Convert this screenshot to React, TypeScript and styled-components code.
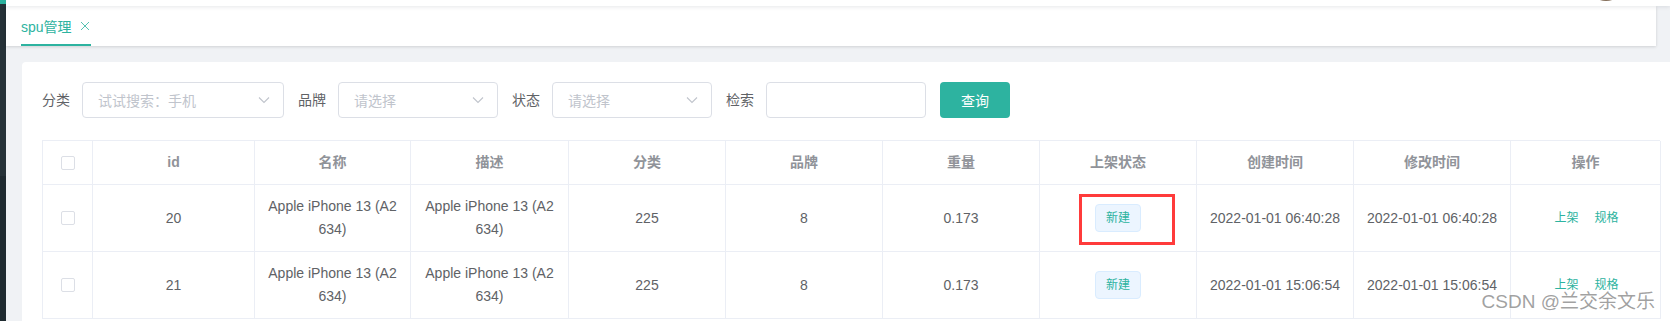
import React from 'react';
import styled, { createGlobalStyle } from 'styled-components';

const GlobalStyle = createGlobalStyle`
  html, body {
    margin: 0;
    padding: 0;
    background: #f0f2f5;
  }
  body {
    font-family: 'Liberation Sans', 'Noto Sans CJK SC', sans-serif;
    font-size: 14px;
    color: #606266;
  }
  * {
    box-sizing: border-box;
  }
`;

const THEME = '#2db3a0';

const Page = styled.div`
  position: relative;
  display: flex;
  width: 1670px;
  height: 321px;
  overflow: hidden;
`;

const Sidebar = styled.div`
  width: 6px;
  flex-shrink: 0;
  background: linear-gradient(to bottom, ${THEME} 0px, ${THEME} 4px, #263238 4px, #263238 176px, #1f2a30 176px);
`;

const Main = styled.div`
  flex: 1;
  display: flex;
  flex-direction: column;
  min-width: 0;
  background: #f0f2f5;
`;

const Navbar = styled.div`
  position: relative;
  z-index: 2;
  height: 6px;
  display: flex;
  justify-content: flex-end;
  padding-right: 44px;
  background: #fff;
  box-shadow: 0 1px 4px rgba(0, 21, 41, 0.1);
`;

const Avatar = styled.div`
  width: 40px;
  height: 40px;
  margin-top: -39px;
  border-radius: 50%;
  background: radial-gradient(circle at 50% 80%, #7a6450, #a89078);
`;

const TagsBar = styled.div`
  position: relative;
  z-index: 1;
  height: 40px;
  margin-right: 14px;
  display: flex;
  align-items: stretch;
  padding-left: 15px;
  background: #fff;
  box-shadow: 0 1px 3px rgba(0, 0, 0, 0.12), 0 0 3px rgba(0, 0, 0, 0.04);
`;

const Tag = styled.div`
  display: flex;
  align-items: center;
  gap: 8px;
  width: 70px;
  padding-top: 1px;
  white-space: nowrap;
  color: ${THEME};
  font-size: 14px;
  border-bottom: 2px solid ${THEME};
`;

const Content = styled.div`
  flex: 1;
  padding: 16px 0 0 16px;
  overflow: hidden;
`;

const Card = styled.div`
  width: 1658px;
  height: 300px;
  padding: 20px;
  background: #fff;
  border-radius: 4px;
`;

const Form = styled.div`
  display: flex;
  align-items: center;
  margin-bottom: 22px;
`;

const FormItem = styled.div`
  display: flex;
  align-items: center;
  margin-right: 14px;
`;

const Label = styled.span`
  padding-right: 12px;
  font-size: 14px;
  color: #606266;
  line-height: 36px;
`;

const Select = styled.div<{ $width: number }>`
  display: flex;
  align-items: center;
  justify-content: space-between;
  width: ${p => p.$width}px;
  height: 36px;
  padding: 0 13px 0 15px;
  border: 1px solid #dcdfe6;
  border-radius: 4px;
  background: #fff;
  color: #c0c4cc;
  font-size: 14px;
`;

const Button = styled.div`
  width: 70px;
  height: 36px;
  display: flex;
  align-items: center;
  justify-content: center;
  border-radius: 4px;
  background: ${THEME};
  color: #fff;
  font-size: 14px;
`;

const Grid = styled.div`
  display: grid;
  grid-template-columns: 50px 162px 156px 158px 157px 157px 157px 157px 157px 157px 150px;
  border-top: 1px solid #ebeef5;
  border-left: 1px solid #ebeef5;
  width: 1618px;
`;

const Cell = styled.div<{ $head?: boolean }>`
  position: relative;
  display: flex;
  align-items: center;
  justify-content: center;
  height: ${p => (p.$head ? 44 : 67)}px;
  padding: 10px 10px;
  border-right: 1px solid #ebeef5;
  border-bottom: 1px solid #ebeef5;
  line-height: 23px;
  font-size: 14px;
  text-align: center;
  word-break: break-all;
  color: ${p => (p.$head ? '#909399' : '#606266')};
  font-weight: ${p => (p.$head ? 'bold' : 'normal')};
`;

const Wrap = styled.span`
  display: block;
  max-width: 132px;
`;

const Checkbox = styled.span`
  display: inline-block;
  width: 14px;
  height: 14px;
  border: 1px solid #dcdfe6;
  border-radius: 2px;
  background: #fff;
`;

const StatusTag = styled.span`
  display: inline-flex;
  align-items: center;
  justify-content: center;
  width: 46px;
  height: 28px;
  border: 1px solid #d9ecff;
  border-radius: 4px;
  background: #ecf5ff;
  color: ${THEME};
  font-size: 12px;
`;

const Highlight = styled.div`
  position: absolute;
  left: 39px;
  top: 9px;
  width: 96px;
  height: 51px;
  border: 3px solid #ff3b3b;
`;

const Actions = styled.div`
  display: flex;
  gap: 16px;
  font-size: 12px;
  color: ${THEME};
  padding-left: 2px;
`;

const Watermark = styled.div`
  position: absolute;
  right: 15px;
  top: 290px;
  font-size: 19px;
  line-height: 24px;
  color: rgba(130, 130, 130, 0.75);
  text-shadow: 0 0 1px #fff, 1px 1px 0 rgba(255, 255, 255, 0.8);
  white-space: nowrap;
`;

const Chevron = () => (
  <svg width="12" height="8" viewBox="0 0 12 8" fill="none">
    <polyline points="1,1.5 6,6.5 11,1.5" stroke="#c0c4cc" strokeWidth="1.1" />
  </svg>
);

const CloseIcon = () => (
  <svg width="10" height="10" viewBox="0 0 10 10">
    <path d="M1 1 L9 9 M9 1 L1 9" stroke={THEME} strokeWidth="1" opacity="0.8" />
  </svg>
);

const headers = ['id', '名称', '描述', '分类', '品牌', '重量', '上架状态', '创建时间', '修改时间', '操作'];

const rows = [
  { id: 20, name: 'Apple iPhone 13 (A2634)', cat: 225, brand: 8, weight: '0.173', time: '2022-01-01 06:40:28' },
  { id: 21, name: 'Apple iPhone 13 (A2634)', cat: 225, brand: 8, weight: '0.173', time: '2022-01-01 15:06:54' },
];

const App = () => {
  return (
    <Page>
      <GlobalStyle />
      <Sidebar />
      <Main>
        <Navbar>
          <Avatar />
        </Navbar>
        <TagsBar>
          <Tag>
            spu管理
            <CloseIcon />
          </Tag>
        </TagsBar>
        <Content>
          <Card>
            <Form>
              <FormItem>
                <Label>分类</Label>
                <Select $width={202}>
                  试试搜索：手机
                  <Chevron />
                </Select>
              </FormItem>
              <FormItem>
                <Label>品牌</Label>
                <Select $width={160}>
                  请选择
                  <Chevron />
                </Select>
              </FormItem>
              <FormItem>
                <Label>状态</Label>
                <Select $width={160}>
                  请选择
                  <Chevron />
                </Select>
              </FormItem>
              <FormItem>
                <Label>检索</Label>
                <Select $width={160} />
              </FormItem>
              <Button>查询</Button>
            </Form>
            <Grid>
              <Cell $head>
                <Checkbox />
              </Cell>
              {headers.map(h => (
                <Cell $head key={h}>
                  {h}
                </Cell>
              ))}
              {rows.map((row, index) => (
                <React.Fragment key={row.id}>
                  <Cell>
                    <Checkbox />
                  </Cell>
                  <Cell>{row.id}</Cell>
                  <Cell>
                    <Wrap>{row.name}</Wrap>
                  </Cell>
                  <Cell>
                    <Wrap>{row.name}</Wrap>
                  </Cell>
                  <Cell>{row.cat}</Cell>
                  <Cell>{row.brand}</Cell>
                  <Cell>{row.weight}</Cell>
                  <Cell>
                    <StatusTag>新建</StatusTag>
                    {index === 0 && <Highlight />}
                  </Cell>
                  <Cell>{row.time}</Cell>
                  <Cell>{row.time}</Cell>
                  <Cell>
                    <Actions>
                      <span>上架</span>
                      <span>规格</span>
                    </Actions>
                  </Cell>
                </React.Fragment>
              ))}
            </Grid>
          </Card>
        </Content>
      </Main>
      <Watermark>CSDN @兰交余文乐</Watermark>
    </Page>
  );
};

export default App;
